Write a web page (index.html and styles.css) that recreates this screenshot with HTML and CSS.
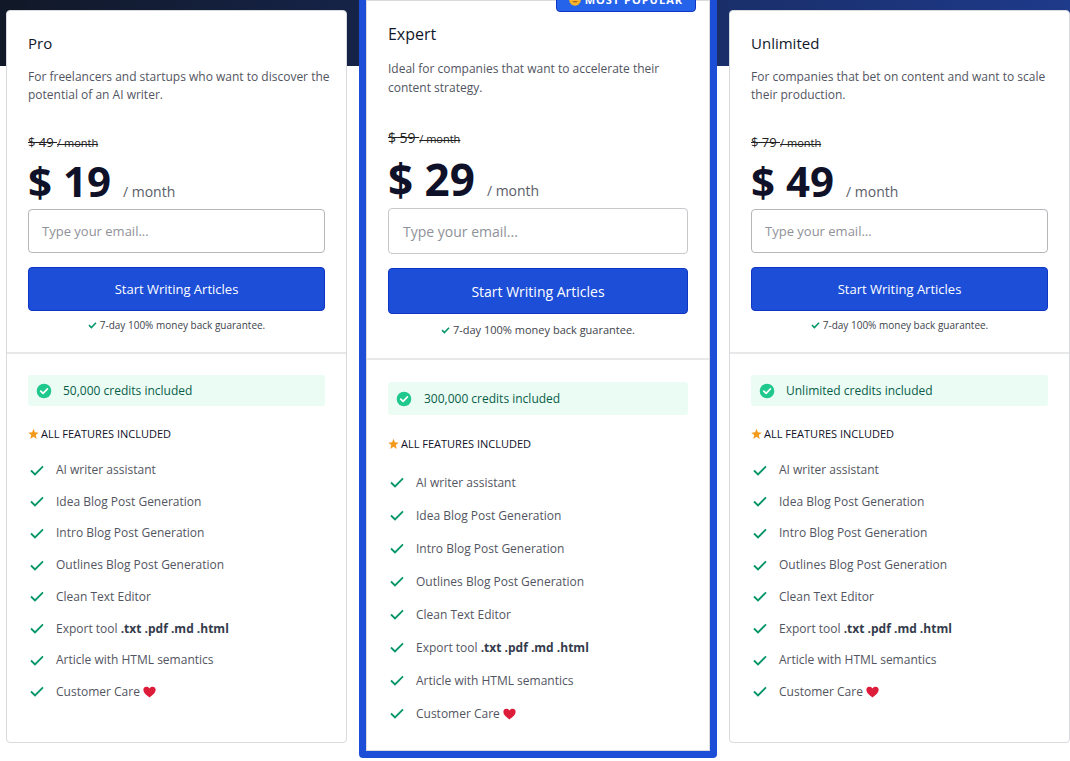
FILE: index.html
```
<!DOCTYPE html>
<html lang="en">
<head>
<meta charset="utf-8">
<title>Pricing</title>
<link rel="stylesheet" href="styles.css">
</head>
<body>
<svg class="sprite" aria-hidden="true">
  <symbol id="check" viewBox="0 0 14 11"><path d="M1 5.5 5 9.5 13 1.3" fill="none" stroke="currentColor" stroke-width="1.8"/></symbol>
  <symbol id="check-bold" viewBox="0 0 9 8"><path d="M1 4.2 3.4 6.5 8 1.8" fill="none" stroke="currentColor" stroke-width="1.6"/></symbol>
  <symbol id="badge-check" viewBox="0 0 16 16"><circle cx="8" cy="8" r="7.3" fill="#1fc98b"/><path d="M4.8 8.2 7.1 10.4 11.3 6" fill="none" stroke="#fff" stroke-width="1.8" stroke-linecap="round" stroke-linejoin="round"/></symbol>
  <symbol id="star" viewBox="0 0 12 12"><path d="M6 .4 7.5 4.2 11.7 4.5 8.5 7.1 9.5 11.4 6 9 2.5 11.4 3.5 7.1.3 4.5 4.5 4.2Z" fill="#f39a1b"/></symbol>
  <symbol id="heart" viewBox="0 0 14 12"><path d="M7 11.8C3.8 9.6.4 7 .4 3.7.4 1.7 1.8.4 3.7.4 5.1.4 6.3 1.1 7 2.2 7.7 1.1 8.900.4 10.3.4c1.9 0 3.3 1.3 3.3 3.3C13.6 7 10.2 9.6 7 11.8Z" fill="#dd1c3a"/></symbol>
  <symbol id="face" viewBox="0 0 12 12"><circle cx="6" cy="6" r="5.8" fill="#fdb52b"/><path d="M3 7Q6 10 9 7Z" fill="#b5651d"/><path d="M3 4.5h2M7 4.5h2" stroke="#8a4a12"/></symbol>
</svg>
<main class="plans">
  <section class="plan">
    <div class="plan-top">
      <h2 class="name">Pro</h2>
      <p class="desc">For freelancers and startups who want to discover the potential of an AI writer.</p>
      <p class="old"><s>$ 49 <small>/ month</small></s></p>
      <p class="price"><strong>$ 19</strong><span>/ month</span></p>
      <form class="signup">
        <input class="email" type="email" placeholder="Type your email..." aria-label="Email for Pro">
        <button class="start" type="button">Start Writing Articles</button>
      </form>
      <p class="guarantee"><svg class="tick"><use href="#check-bold"/></svg>7-day 100% money back guarantee.</p>
    </div>
    <div class="plan-body">
      <p class="credits"><svg class="seal"><use href="#badge-check"/></svg>50,000 credits included</p>
      <h3 class="all"><svg class="star"><use href="#star"/></svg>ALL FEATURES INCLUDED</h3>
      <ul class="features">
        <li><svg class="mark"><use href="#check"/></svg><span>AI writer assistant</span></li>
        <li><svg class="mark"><use href="#check"/></svg><span>Idea Blog Post Generation</span></li>
        <li><svg class="mark"><use href="#check"/></svg><span>Intro Blog Post Generation</span></li>
        <li><svg class="mark"><use href="#check"/></svg><span>Outlines Blog Post Generation</span></li>
        <li><svg class="mark"><use href="#check"/></svg><span>Clean Text Editor</span></li>
        <li><svg class="mark"><use href="#check"/></svg><span>Export tool <b>.txt .pdf .md .html</b></span></li>
        <li><svg class="mark"><use href="#check"/></svg><span>Article with HTML semantics</span></li>
        <li><svg class="mark"><use href="#check"/></svg><span>Customer Care</span><svg class="heart"><use href="#heart"/></svg></li>
      </ul>
    </div>
  </section>
  <section class="plan popular">
    <p class="ribbon"><svg class="face"><use href="#face"/></svg>MOST POPULAR</p>
    <div class="plan-top">
      <h2 class="name">Expert</h2>
      <p class="desc">Ideal for companies that want to accelerate their content strategy.</p>
      <p class="old"><s>$ 59 <small>/ month</small></s></p>
      <p class="price"><strong>$ 29</strong><span>/ month</span></p>
      <form class="signup">
        <input class="email" type="email" placeholder="Type your email..." aria-label="Email for Expert">
        <button class="start" type="button">Start Writing Articles</button>
      </form>
      <p class="guarantee"><svg class="tick"><use href="#check-bold"/></svg>7-day 100% money back guarantee.</p>
    </div>
    <div class="plan-body">
      <p class="credits"><svg class="seal"><use href="#badge-check"/></svg>300,000 credits included</p>
      <h3 class="all"><svg class="star"><use href="#star"/></svg>ALL FEATURES INCLUDED</h3>
      <ul class="features">
        <li><svg class="mark"><use href="#check"/></svg><span>AI writer assistant</span></li>
        <li><svg class="mark"><use href="#check"/></svg><span>Idea Blog Post Generation</span></li>
        <li><svg class="mark"><use href="#check"/></svg><span>Intro Blog Post Generation</span></li>
        <li><svg class="mark"><use href="#check"/></svg><span>Outlines Blog Post Generation</span></li>
        <li><svg class="mark"><use href="#check"/></svg><span>Clean Text Editor</span></li>
        <li><svg class="mark"><use href="#check"/></svg><span>Export tool <b>.txt .pdf .md .html</b></span></li>
        <li><svg class="mark"><use href="#check"/></svg><span>Article with HTML semantics</span></li>
        <li><svg class="mark"><use href="#check"/></svg><span>Customer Care</span><svg class="heart"><use href="#heart"/></svg></li>
      </ul>
    </div>
  </section>
  <section class="plan">
    <div class="plan-top">
      <h2 class="name">Unlimited</h2>
      <p class="desc">For companies that bet on content and want to scale their production.</p>
      <p class="old"><s>$ 79 <small>/ month</small></s></p>
      <p class="price"><strong>$ 49</strong><span>/ month</span></p>
      <form class="signup">
        <input class="email" type="email" placeholder="Type your email..." aria-label="Email for Unlimited">
        <button class="start" type="button">Start Writing Articles</button>
      </form>
      <p class="guarantee"><svg class="tick"><use href="#check-bold"/></svg>7-day 100% money back guarantee.</p>
    </div>
    <div class="plan-body">
      <p class="credits"><svg class="seal"><use href="#badge-check"/></svg>Unlimited credits included</p>
      <h3 class="all"><svg class="star"><use href="#star"/></svg>ALL FEATURES INCLUDED</h3>
      <ul class="features">
        <li><svg class="mark"><use href="#check"/></svg><span>AI writer assistant</span></li>
        <li><svg class="mark"><use href="#check"/></svg><span>Idea Blog Post Generation</span></li>
        <li><svg class="mark"><use href="#check"/></svg><span>Intro Blog Post Generation</span></li>
        <li><svg class="mark"><use href="#check"/></svg><span>Outlines Blog Post Generation</span></li>
        <li><svg class="mark"><use href="#check"/></svg><span>Clean Text Editor</span></li>
        <li><svg class="mark"><use href="#check"/></svg><span>Export tool <b>.txt .pdf .md .html</b></span></li>
        <li><svg class="mark"><use href="#check"/></svg><span>Article with HTML semantics</span></li>
        <li><svg class="mark"><use href="#check"/></svg><span>Customer Care</span><svg class="heart"><use href="#heart"/></svg></li>
      </ul>
    </div>
  </section>
</main>
</body>
</html>
```

FILE: styles.css
```
* { box-sizing: border-box; margin: 0; padding: 0; }
body {
  overflow-x: hidden;
  font-family: "Open Sans", "Noto Sans", sans-serif;
  color: #0f172a;
  background: #fff linear-gradient(90deg, #111827, #1e3a8a) no-repeat 0 0 / 100% 66px;
}
.sprite { position: absolute; width: 0; height: 0; }
svg { flex: none; }
.plans {
  display: grid;
  grid-template-columns: 20fr 21fr 20fr;
  gap: 12px;
  padding-left: 6px;
}
.plan {
  display: flex;
  flex-direction: column;
  margin: 10px 0 17px;
  background: #fff;
  border: 1px solid #d9dade;
  border-radius: 4px;
}
.plan-top { padding: 20px 21px 19px; border-bottom: 2px solid #e7e8ea; }
.plan-body { display: flex; flex: 1; flex-direction: column; padding: 21px 21px 41px; }
.name { font-size: 15px; line-height: 24px; font-weight: 400; }
.desc { margin: 13px -12px 0 0; min-height: 36px; font-size: 12px; line-height: 18px; color: #52555f; }
.old { margin-top: 28px; font-size: 13px; line-height: 20px; color: #222; }
.old small { font-size: 11px; }
.price { display: flex; align-items: baseline; gap: 12px; }
.price strong { font-size: 42px; line-height: 56px; font-weight: 700; color: #0f1129; }
.price span { font-size: 14px; line-height: 20px; color: #5a5e69; }
.signup { display: flex; flex-direction: column; gap: 14px; }
.email, .start { width: 100%; height: 44px; border-radius: 4px; font-family: inherit; font-size: 13px; }
.email { padding: 0 13px; border: 1px solid #b4b6ba; color: #222; background: #fff; }
.email::placeholder { color: #8f9299; }
.start { border: 1px solid #0f35c4; background: #1c4ed8; color: #fff; }
.guarantee { display: flex; align-items: center; justify-content: center; gap: 3px; margin-top: 6px; font-size: 10px; line-height: 16px; color: #40434c; }
.tick { width: 9px; height: 8px; color: #079669; }
.credits { display: flex; align-items: center; gap: 11px; padding: 0 8px; font-size: 12px; line-height: 31px; color: #085e48; background: #ebfcf5; border-radius: 3px; }
.seal { width: 16px; height: 16px; }
.all { display: flex; align-items: center; gap: 2px; margin-top: 19px; font-size: 11px; line-height: 18px; font-weight: 500; color: #0f1129; }
.star { width: 11px; height: 12px; }
.features { display: flex; flex: 1; flex-direction: column; justify-content: space-between; margin-top: 18px; list-style: none; font-size: 12px; line-height: 18px; color: #52555f; }
.features li { display: flex; align-items: center; }
.features b { color: #343b4c; }
.mark { width: 14px; height: 11px; margin: 0 12px 0 2px; color: #079669; }
.heart { width: 13px; height: 12px; margin-left: 3px; }

/* Highlighted plan, one step larger than its neighbours */
.popular { position: relative; margin: -7px 0 2px; border: 7px solid #1c4ed8; box-shadow: inset 0 0 0 1px #d9dade; }
.popular .plan-top { margin: 0 1px; padding: 22px 21px 20px; }
.popular .plan-body { padding: 22px 22px 28px; }
.popular .name { font-size: 16px; }
.popular .desc { margin-right: 0; min-height: 38px; line-height: 19px; }
.popular .old { margin-top: 30px; font-size: 14px; line-height: 22px; }
.popular .price strong { font-size: 44px; line-height: 58px; }
.popular .email, .popular .start { height: 46px; font-size: 14px; }
.popular .email { padding: 0 14px; border-color: #c6c8cc; }
.popular .guarantee { margin-top: 7px; font-size: 11px; line-height: 17px; }
.popular .credits { line-height: 33px; gap: 12px; }
.popular .all { margin-top: 19px; line-height: 19px; }
.popular .features { gap: 14px; margin-top: 20px; line-height: 19px; }
.ribbon { position: absolute; top: -12px; right: 14px; display: flex; align-items: center; gap: 4px; padding: 0 12px; border: 1px solid #0f35c4; border-radius: 4px; background: #2563eb; color: #fff; font-size: 11px; line-height: 22px; font-weight: 700; letter-spacing: 1px; }
.face { width: 12px; height: 12px; }
```
